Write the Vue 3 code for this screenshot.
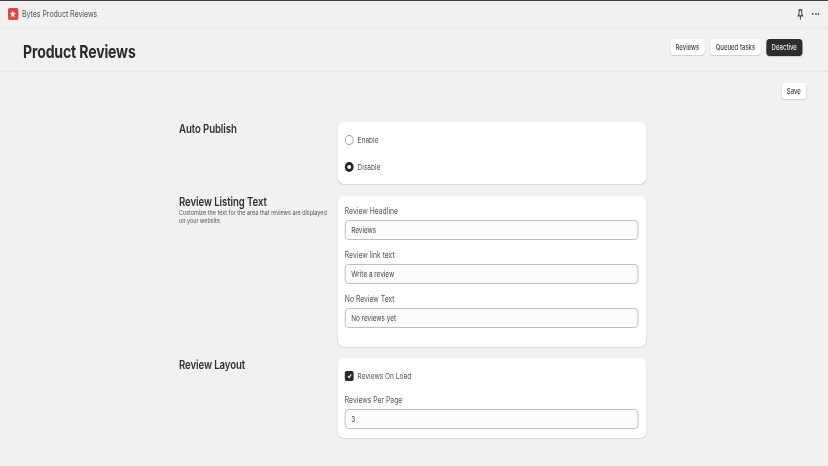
<script setup>
const sections = [
  { title: 'Review Headline', value: 'Reviews' },
  { title: 'Review link text', value: 'Write a review' },
  { title: 'No Review Text', value: 'No reviews yet' }
]
</script>

<template>
  <div class="viewport">
    <div class="page">
      <header class="topbar">
        <div class="brand">
          <span class="logo">
            <svg viewBox="0 0 12 12" width="10" height="8"><path fill="#fff" d="M6 .6l1.6 3.4 3.8.5-2.8 2.6.7 3.7L6 9l-3.3 1.8.7-3.7L.6 4.5l3.8-.5z"/></svg>
          </span>
          <span class="brand-name">Bytes Product Reviews</span>
        </div>
        <div class="tools">
          <svg viewBox="0 0 10 12" width="9" height="11" fill="none" stroke="#444" stroke-width="1.4"><path d="M2.5 1h5M3.2 1v4.2L1.8 7.6h6.4L6.8 5.2V1M5 7.6V11.8"/></svg>
          <span class="dots"><i></i><i></i><i></i></span>
        </div>
      </header>
      <section class="titlebar">
        <h1>Product Reviews</h1>
        <nav class="actions">
          <button class="btn">Reviews</button>
          <button class="btn">Queued tasks</button>
          <button class="btn dark">Deactive</button>
        </nav>
      </section>
      <main class="content">
        <div class="save-row"><button class="btn save">Save</button></div>
        <div class="settings">
          <div class="row">
            <div class="side"><h2>Auto Publish</h2></div>
            <div class="card radios">
              <label class="choice"><span class="radio"></span>Enable</label>
              <label class="choice"><span class="radio on"></span>Disable</label>
            </div>
          </div>
          <div class="row">
            <div class="side">
              <h2 class="raised">Review Listing Text</h2>
              <p>Customize the text for the area that reviews are displayed on your website.</p>
            </div>
            <div class="card fields">
              <div v-for="s in sections" :key="s.title" class="field">
                <span class="label">{{ s.title }}</span>
                <div class="input">{{ s.value }}</div>
              </div>
            </div>
          </div>
          <div class="row">
            <div class="side"><h2>Review Layout</h2></div>
            <div class="card layout">
              <label class="choice">
                <span class="check">
                  <svg viewBox="0 0 10 10" width="10" height="8" fill="none" stroke="#fff" stroke-width="1.5"><path d="M2.5 5.3l1.8 1.8 3.2-4"/></svg>
                </span>
                Reviews On Load
              </label>
              <div class="field">
                <span class="label">Reviews Per Page</span>
                <div class="input">3</div>
              </div>
            </div>
          </div>
        </div>
      </main>
    </div>
  </div>
</template>

<style>
html, body { margin: 0; background: #f1f1f1; }
</style>

<style scoped>
.viewport {
  width: 828px;
  height: 466px;
  overflow: hidden;
}
.page {
  width: 1035px;
  height: 466px;
  overflow: hidden;
  background: #f1f1f1;
  border-top: 1px solid #404040;
  box-sizing: border-box;
  font-family: Inter, "Liberation Sans", sans-serif;
  color: #303030;
  transform: scaleX(0.8);
  transform-origin: 0 0;
  filter: blur(0.3px);
}
.topbar {
  height: 26px;
  display: flex;
  align-items: center;
  justify-content: space-between;
  padding: 0 11px 0 10px;
  border-bottom: 1px solid #e9e9e9;
}
.brand { display: flex; align-items: center; gap: 5px; }
.logo {
  width: 12.5px;
  height: 12px;
  border-radius: 2px;
  background: #e0473d;
  display: flex;
  align-items: center;
  justify-content: center;
}
.brand-name { font-size: 8.7px; color: #555; }
.tools { display: flex; align-items: center; gap: 10px; }
.dots { display: flex; gap: 1.5px; }
.dots i { width: 2px; height: 2px; border-radius: 50%; background: #444; }
.titlebar {
  height: 43px;
  display: flex;
  align-items: flex-start;
  justify-content: space-between;
  padding: 0 32.5px 0 28.75px;
  border-bottom: 1px solid #e9e9e9;
}
h1 {
  margin: 12.5px 0 0;
  font-size: 17.6px;
  line-height: 22px;
  font-weight: 700;
  letter-spacing: -0.2px;
  color: #2b2b2b;
}
.actions { display: flex; gap: 7.5px; align-items: flex-start; margin-top: 11px; }
.btn {
  height: 16px;
  padding: 0 6.5px;
  border: 0;
  border-radius: 4px;
  background: #fff;
  font: 500 7.5px Inter, "Liberation Sans", sans-serif;
  color: #444;
  box-shadow: 0 1px 1px rgba(0, 0, 0, 0.14);
}
.dark { background: #2c2c2c; color: #eee; height: 17px; }
.content { padding: 11px 27.5px 0 223.75px; }
.save-row { display: flex; justify-content: flex-end; }
.settings {
  width: 583.75px;
  margin-top: 23px;
  display: flex;
  flex-direction: column;
  gap: 11px;
}
.row { display: flex; gap: 2.25px; align-items: flex-start; }
.side { width: 196px; flex: none; }
h2 {
  margin: 0;
  font-size: 12px;
  line-height: 14px;
  font-weight: 600;
  color: #303030;
  letter-spacing: -0.1px;
}
h2.raised { margin-top: -1px; }
.side p { margin: 0; max-width: 190px; font-size: 6.8px; line-height: 7.5px; color: #555; }
.card {
  flex: 1;
  background: #fff;
  border-radius: 8px;
  box-shadow: 0 1px 1px rgba(0, 0, 0, 0.1);
  padding: 0 10px 0 9px;
  box-sizing: border-box;
}
.radios {
  height: 62px;
  margin-bottom: 1px;
  padding-top: 13px;
  display: flex;
  flex-direction: column;
  gap: 17px;
}
.fields {
  height: 151px;
  padding-top: 11px;
  display: flex;
  flex-direction: column;
  gap: 11px;
}
.layout { height: 80px; padding-top: 13px; }
.layout .field { margin-top: 15px; }
.choice {
  display: flex;
  align-items: center;
  gap: 5px;
  height: 10px;
  font-size: 8.2px;
  color: #555;
}
.radio {
  width: 11px;
  height: 10px;
  box-sizing: border-box;
  border-radius: 50%;
  background: #fff;
  border: 1px solid #999;
}
.radio.on { border: 3px solid #222; }
.check {
  width: 11px;
  height: 10px;
  border-radius: 2px;
  background: #2a2a2a;
  display: flex;
  align-items: center;
  justify-content: center;
}
.field { display: flex; flex-direction: column; gap: 4px; }
.label { font-size: 8.5px; line-height: 9px; color: #555; }
.input {
  height: 20px;
  box-sizing: border-box;
  border: 1.5px solid #b8b8b8;
  border-radius: 5px;
  background-color: #fdfdfd;
  background-image: radial-gradient(#dcdcdc 0.7px, transparent 0.9px);
  background-size: 5px 4px;
  font-size: 8px;
  line-height: 18px;
  padding: 0 7px;
  color: #444;
}
</style>
